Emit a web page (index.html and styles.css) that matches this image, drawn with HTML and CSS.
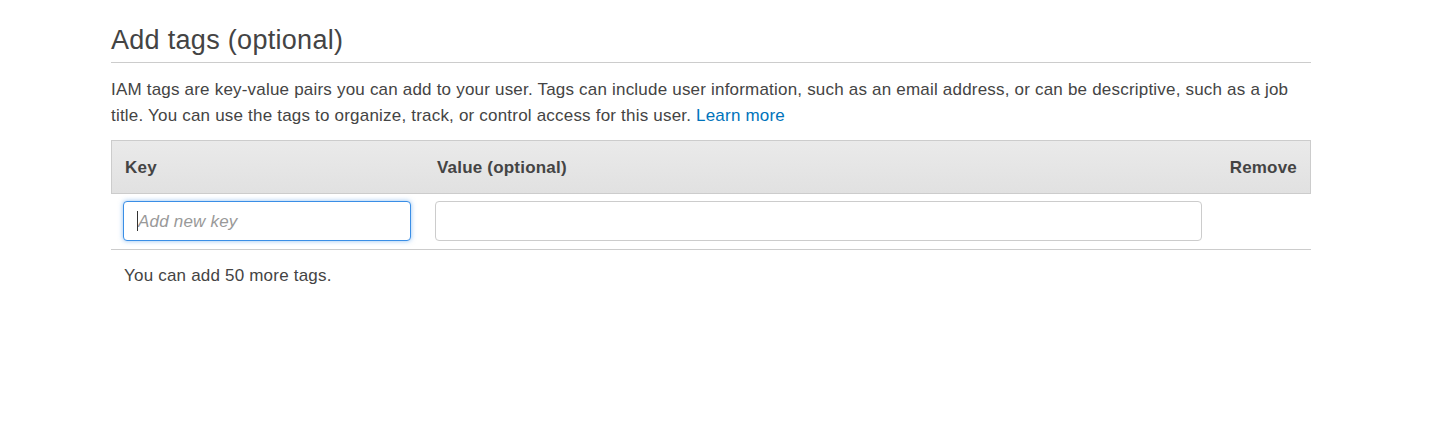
FILE: index.html
```html
<!DOCTYPE html>
<html>
<head>
<meta charset="utf-8">
<link rel="stylesheet" href="styles.css">
</head>
<body>
<div class="page">
  <h2 class="title">Add tags (optional)</h2>
  <p class="desc">IAM tags are key-value pairs you can add to your user. Tags can include user information, such as an email address, or can be descriptive, such as a job title. You can use the tags to organize, track, or control access for this user. <a href="#" class="link">Learn more</a></p>
  <div class="table">
    <div class="row head">
      <div class="cell">Key</div>
      <div class="cell">Value (optional)</div>
      <div class="cell right">Remove</div>
    </div>
    <div class="row body">
      <div class="cell"><span class="field-wrap"><input class="field focused" type="text" placeholder="Add new key"></span></div>
      <div class="cell"><input class="field" type="text"></div>
      <div class="cell"></div>
    </div>
  </div>
  <p class="note">You can add 50 more tags.</p>
</div>
</body>
</html>
```
FILE: styles.css
```css
html, body {
  margin: 0;
  padding: 0;
  background: #fff;
}
body {
  font-family: "Liberation Sans", Arial, sans-serif;
  color: #444;
  letter-spacing: 0.2px;
}
.page {
  width: 1200px;
  margin-left: 111px;
  padding-top: 23px;
}
.title {
  font-size: 27px;
  font-weight: normal;
  margin: 0;
  line-height: 35px;
  padding-bottom: 4px;
  border-bottom: 1px solid #ccc;
  color: #444;
  letter-spacing: 0.3px;
}
.desc {
  margin: 14px 0 0 0;
  font-size: 17px;
  line-height: 26px;
}
.link {
  color: #0073bb;
  text-decoration: none;
}
.table {
  margin-top: 11px;
}
.row {
  display: grid;
  grid-template-columns: 312px 1fr 97px;
}
.head {
  box-sizing: border-box;
  height: 54px;
  padding-top: 2px;
  align-items: center;
  background: linear-gradient(#eaeaea, #e1e1e1);
  border: 1px solid #ccc;
  font-weight: bold;
  font-size: 17px;
}
.body {
  box-sizing: border-box;
  padding: 7px 0 8px;
  border-bottom: 1px solid #ccc;
  align-items: start;
}
.cell {
  padding: 0 12px 0 13px;
}
.cell.right {
  text-align: right;
  padding-right: 13px;
}
.body .cell {
  padding: 0 12px;
}
.field-wrap {
  position: relative;
  display: block;
}
.field-wrap::before {
  content: "";
  position: absolute;
  left: 14px;
  top: 10px;
  width: 1px;
  height: 20px;
  background: #333;
}
.field {
  display: block;
  box-sizing: border-box;
  width: 100%;
  height: 40px;
  border: 1px solid #ccc;
  border-radius: 4px;
  padding: 1px 14px 0;
  font-family: "Liberation Sans", Arial, sans-serif;
  font-size: 17px;
  letter-spacing: 0.2px;
  color: #444;
  outline: none;
  background: #fff;
}
.field.focused {
  border-color: #3a8ee6;
  box-shadow: 0 0 5px rgba(58, 142, 230, 0.55);
}
.field::placeholder {
  font-style: italic;
  color: #999;
}
.note {
  margin: 14px 0 0 13px;
  font-size: 17px;
  line-height: 24px;
}
```
